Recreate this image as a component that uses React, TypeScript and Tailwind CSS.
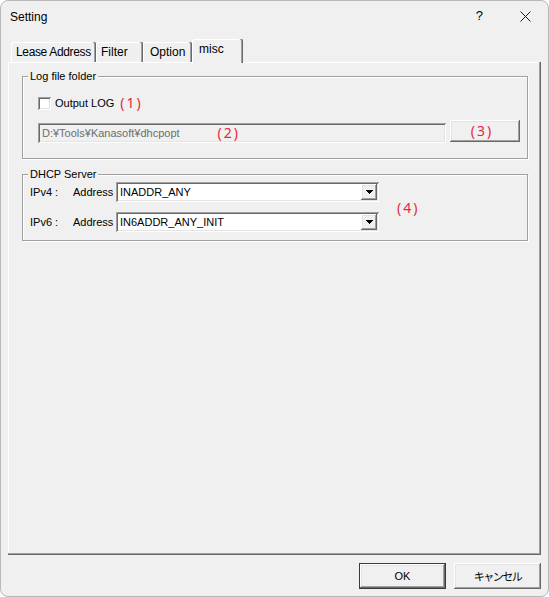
import React from "react";

const raised =
  "shadow-[inset_-1px_-1px_0_#696969,inset_1px_1px_0_#ffffff,inset_-2px_-2px_0_#a0a0a0,inset_2px_2px_0_#e3e3e3]";
const sunken =
  "shadow-[inset_1px_1px_0_#a0a0a0,inset_-1px_-1px_0_#ffffff,inset_2px_2px_0_#696969,inset_-2px_-2px_0_#e3e3e3]";
const red = "font-['Noto_Sans','Liberation_Sans',sans-serif] text-[14px] leading-[18px] text-[#e5283c] tracking-[2px]";
const groupBox =
  "w-[506px] border border-[#a0a0a0] shadow-[1px_1px_0_#ffffff,inset_1px_1px_0_#ffffff]";
const legend = "ml-[5px] px-[2px] text-[11px] leading-[14px] bg-[#f0f0f0] text-black";

function Tab({ label, width, pl, selected }: { label: string; width: string; pl: string; selected?: boolean }) {
  const base =
    "shrink-0 bg-[#f0f0f0] text-[12px] leading-[14px] text-black rounded-t-[2px] shadow-[inset_-1px_0_0_#696969,inset_-2px_0_0_#a0a0a0,inset_1px_1px_0_#ffffff]";
  return selected ? (
    <div className={`${base} ${width} ${pl} relative z-10 h-[24px] mb-[-1px] pt-[3px]`}>{label}</div>
  ) : (
    <div className={`${base} ${width} ${pl} h-[20px] pt-[3px]`}>{label}</div>
  );
}

function Combo({ value }: { value: string }) {
  return (
    <div className={`w-[263px] h-[20px] bg-white ${sunken} flex items-center pl-[4px] pr-[2px]`}>
      <span className="flex-1 text-[11px] leading-[14px] text-black">{value}</span>
      <div className={`w-[16px] h-[16px] bg-[#f0f0f0] ${raised} flex items-center justify-center`}>
        <svg width="7" height="4" viewBox="0 0 7 4" shapeRendering="crispEdges">
          <polygon points="0,0 7,0 3.5,4" fill="#000" />
        </svg>
      </div>
    </div>
  );
}

function AddrRow({ label, value, className }: { label: string; value: string; className?: string }) {
  return (
    <div className={`flex items-center h-[20px] ${className ?? ""}`}>
      <span className="w-[43px] text-[11px] leading-[14px]">{label}</span>
      <span className="w-[43px] text-[11px] leading-[14px]">Address</span>
      <Combo value={value} />
    </div>
  );
}

export default function App() {
  return (
    <div className="w-[549px] h-[597px] bg-[#f0f0f0] border border-[#b8b8b8] rounded-[8px] flex flex-col overflow-hidden font-['Liberation_Sans','Noto_Sans_CJK_JP',sans-serif] text-black">
      {/* Title bar */}
      <div className="h-[38px] shrink-0 flex items-start pt-[9px] pl-[9px] pr-[17px]">
        <span className="text-[12px] leading-[14px]">Setting</span>
        <div className="ml-auto flex items-start">
          <span className="text-[13px] leading-[14px] mt-[-1px]">?</span>
          <svg className="ml-[37px] mt-[1px]" width="11" height="11" viewBox="0 0 11 11">
            <path d="M0.5 0.5 L10.5 10.5 M10.5 0.5 L0.5 10.5" stroke="#1a1a1a" strokeWidth="1" fill="none" />
          </svg>
        </div>
      </div>

      {/* Tabs + page */}
      <div className="flex-1 flex flex-col px-[7px]">
        <div className="h-[23px] shrink-0 flex items-end pl-[3px]">
          <Tab label="Lease Address" width="w-[85px]" pl="pl-[5px] tracking-[-0.35px]" />
          <Tab label="Filter" width="w-[47px]" pl="pl-[5px]" />
          <Tab label="Option" width="w-[49px]" pl="pl-[7px]" />
          <Tab label="misc" width="w-[51px]" pl="pl-[7px]" selected />
        </div>
        <div className="flex-1 flex flex-col items-start pl-[14px] pt-[7px] bg-[#f0f0f0] shadow-[inset_-1px_-1px_0_#696969,inset_-2px_-2px_0_#a0a0a0,inset_1px_1px_0_#ffffff]">
          {/* Log file folder */}
          <fieldset className={groupBox}>
            <legend className={legend}>Log file folder</legend>
            <div className="mt-[10px] flex h-[20px] items-center pl-[15px]">
              <span className={`w-[13px] h-[13px] bg-white ${sunken}`} />
              <span className="ml-[4px] text-[11px] leading-[14px]">Output LOG</span>
              <span className={`${red} ml-[6px]`}>(1)</span>
            </div>
            <div className="mt-[7px] flex items-start pl-[15px] pb-[15px]">
              <div className={`w-[408px] h-[20px] mt-[3px] ${sunken} flex items-center pl-[4px]`}>
                <span className="text-[11px] leading-[14px] text-[#6d6d6d]">D:¥Tools¥Kanasoft¥dhcpopt</span>
                <span className={`${red} ml-[38px]`}>(2)</span>
              </div>
              <div className={`ml-[4px] w-[70px] h-[22px] ${raised} flex items-center justify-center pr-[6px]`}>
                <span className={red}>(3)</span>
              </div>
            </div>
          </fieldset>

          {/* DHCP Server */}
          <fieldset className={`${groupBox} mt-[8px]`}>
            <legend className={legend}>DHCP Server</legend>
            <div className="flex items-center pl-[7px] pt-[1px] pb-[8px]">
              <div className="flex flex-col">
                <AddrRow label="IPv4 :" value="INADDR_ANY" />
                <AddrRow label="IPv6 :" value="IN6ADDR_ANY_INIT" className="mt-[10px]" />
              </div>
              <span className={`${red} ml-[18px] mt-[2px]`}>(4)</span>
            </div>
          </fieldset>
        </div>
      </div>

      {/* Buttons */}
      <div className="h-[41px] shrink-0 flex justify-end items-start pt-[8px] pr-[7px] gap-[8px]">
        <div className="w-[87px] h-[26px] flex items-center justify-center text-[11px] leading-[14px] shadow-[inset_0_0_0_1px_#3a3a3a,inset_-2px_-2px_0_#696969,inset_2px_2px_0_#ffffff,inset_-3px_-3px_0_#a0a0a0,inset_3px_3px_0_#e3e3e3]">
          OK
        </div>
        <div className={`w-[87px] h-[26px] flex items-center justify-center ${raised}`}>
          <span className="font-['Noto_Sans_CJK_JP',sans-serif] text-[11px] leading-[14px] tracking-[-1.5px]">キャンセル</span>
        </div>
      </div>
    </div>
  );
}
